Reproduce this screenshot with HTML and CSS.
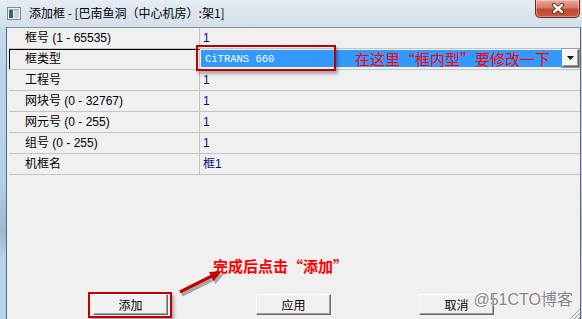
FILE: index.html
```html
<!DOCTYPE html>
<html lang="zh-CN">
<head>
    <meta charset="UTF-8">
    <meta name="viewport" content="width=device-width, initial-scale=1.0">
    <title>添加框</title>
    <link rel="stylesheet" href="styles.css">
</head>
<body>
    <div class="window">
        <div class="titlebar">
            <svg class="app-icon" width="14" height="13" viewBox="0 0 14 13">
                <rect x="0.5" y="0.5" width="13" height="12" fill="#eef2f6" stroke="#7d8b98"/>
                <rect x="2" y="3" width="4" height="8" fill="#2e6b63"/>
                <rect x="7" y="3" width="5" height="8" fill="#c9d3dc"/>
                <rect x="2" y="2" width="10" height="1" fill="#9fb0bf"/>
            </svg>
            <span class="title">添加框 - [巴南鱼洞（中心机房）:架1]</span>
            <div class="close">
                <svg width="14" height="11" viewBox="0 0 14 11">
                    <path d="M3 2 L11 9 M11 2 L3 9" stroke="#5a2318" stroke-width="4.2" stroke-linecap="round"/>
                    <path d="M3 2 L11 9 M11 2 L3 9" stroke="#fff" stroke-width="2.4" stroke-linecap="round"/>
                </svg>
            </div>
        </div>

        <div class="client">
            <div class="grid">
                <div class="row"><div class="key">框号 (1 - 65535)</div><div class="val">1</div></div>
                <div class="row focus">
                    <div class="key">框类型</div>
                    <div class="val combo">
                        <div class="combo-field">
                            <span class="combo-text">CiTRANS 660</span>
                            <span class="note">在这里“框内型”要修改一下</span>
                        </div>
                        <div class="combo-btn">
                            <svg width="7" height="4" viewBox="0 0 7 4"><path d="M0 0 H7 L3.5 4 Z" fill="#000"/></svg>
                        </div>
                    </div>
                </div>
                <div class="row"><div class="key">工程号</div><div class="val">1</div></div>
                <div class="row"><div class="key">网块号 (0 - 32767)</div><div class="val">1</div></div>
                <div class="row"><div class="key">网元号 (0 - 255)</div><div class="val">1</div></div>
                <div class="row"><div class="key">组号 (0 - 255)</div><div class="val">1</div></div>
                <div class="row"><div class="key">机框名</div><div class="val">框1</div></div>
            </div>

            <div class="hint">完成后点击“添加”</div>

            <div class="buttons">
                <button class="btn btn-marked">添加</button>
                <button class="btn">应用</button>
                <button class="btn">取消</button>
            </div>

            <!-- annotation arrow -->
            <svg class="arrow" width="60" height="40" viewBox="0 0 60 40">
                <g transform="translate(2 3)" opacity="0.3">
                    <path d="M10 30 L42 14" stroke="#000" stroke-width="3.2"/>
                    <path d="M52 9 L43.5 18.9 L39.1 9.9 Z" fill="#000"/>
                </g>
                <path d="M10 30 L42 14" stroke="#c00000" stroke-width="3.2"/>
                <path d="M52 9 L43.5 18.9 L39.1 9.9 Z" fill="#c00000"/>
            </svg>

            <div class="watermark">@51CTO博客</div>
            <div class="grip"></div>
        </div>
    </div>
</body>
</html>
```

FILE: styles.css
```css
* {
    box-sizing: border-box;
}

body {
    margin: 0;
    font-family: "Liberation Sans", "Noto Sans CJK SC", sans-serif;
    font-size: 12px;
    background-color: #fff;
}

.window {
    width: 582px;
    height: 319px;
    display: flex;
    flex-direction: column;
    overflow: hidden;
    background: linear-gradient(to bottom, #d4e1ee 0, #bcd4ec 60px, #b4d0ec 180px, #9fb6cc 230px, #b8d3ee 260px);
}

.titlebar {
    height: 27px;
    flex: none;
    display: flex;
    align-items: flex-start;
    padding-left: 7px;
    background: linear-gradient(to bottom, #e4ecf4, #d3dfea);
}

.app-icon {
    margin-top: 7px;
    flex: none;
}

.title {
    margin-left: 8px;
    line-height: 25px;
    font-family: "Noto Sans CJK SC", sans-serif;
    font-size: 12px;
    color: #000;
}

.close {
    margin-left: auto;
    margin-right: 2px;
    width: 45px;
    height: 18px;
    border: 1px solid #6b2418;
    border-top: none;
    border-radius: 0 0 5px 5px;
    background: linear-gradient(to bottom, #e9a899 0, #d67a66 45%, #c04a33 55%, #c9583f 100%);
    box-shadow: inset 0 0 0 1px rgba(255, 255, 255, 0.35);
    display: flex;
    align-items: center;
    justify-content: center;
}

.client {
    flex: 1;
    margin: 0 1px 0 6px;
    border-left: 1px solid #56697d;
    border-right: 1px solid #56697d;
    border-top: 1px solid #848f9a;
    background-color: #f0f0f0;
    display: flex;
    flex-direction: column;
    position: relative;
}

.grid {
    margin-left: 2px;
}

.row {
    display: flex;
    height: 21px;
    border-bottom: 1px solid #c4c4c4;
}

.key {
    width: 191px;
    padding-left: 16px;
    border-right: 1px solid #c4c4c4;
    line-height: 20px;
    color: #000;
}

.val {
    flex: 1;
    padding-left: 3px;
    line-height: 20px;
    color: #0a0a80;
}

.focus .key {
    border-top: 1px solid #000;
    border-left: 1px solid #000;
    padding-left: 15px;
    line-height: 19px;
}

/* combo box of the focused row */
.combo {
    display: flex;
    padding: 0;
}

.combo-field {
    flex: 1;
    margin: 1px 0 2px 1px;
    background-color: #3399ff;
    display: flex;
    align-items: center;
    position: relative;
}

.combo-field::before {
    content: "";
    position: absolute;
    left: -5px;
    top: -5px;
    width: 136px;
    height: 22px;
    border: 2px solid #c00000;
    box-shadow: 2px 3px 3px rgba(0, 0, 0, 0.3);
}

.combo-text {
    margin-left: 4px;
    font-family: "Liberation Mono", monospace;
    font-size: 10.5px;
    color: #fff;
}

.note {
    margin-left: auto;
    margin-right: 12px;
    font-family: "Noto Sans CJK SC", sans-serif;
    font-size: 15px;
    line-height: 16px;
    color: #ff0000;
}

.combo-btn {
    width: 17px;
    height: 18px;
    margin-right: 1px;
    background-color: #f4f4f4;
    border: 1px solid;
    border-color: #fff #5e5e5e #5e5e5e #fff;
    box-shadow: inset -1px -1px #a0a0a0, 0 0 0 1px #9a9a9a;
    display: flex;
    align-items: center;
    justify-content: center;
}

.hint {
    margin-top: auto;
    padding-left: 206px;
    height: 20px;
    line-height: 20px;
    font-family: "Noto Sans CJK SC", sans-serif;
    font-size: 15px;
    font-weight: bold;
    color: #ff0000;
}

.buttons {
    display: flex;
    gap: 88px;
    padding-left: 86px;
    margin-top: 18px;
    padding-bottom: 4px;
}

.btn {
    width: 75px;
    height: 21px;
    padding: 0;
    background-color: #f0f0f0;
    border: 1px solid;
    border-color: #fff #696969 #696969 #fff;
    box-shadow: inset -1px -1px #a0a0a0;
    font-family: "Noto Sans CJK SC", sans-serif;
    font-size: 12px;
    color: #000;
    position: relative;
}

.btn-marked::after {
    content: "";
    position: absolute;
    top: -3px;
    left: -6px;
    right: -5px;
    bottom: -4px;
    border: 2px solid #c00000;
    box-shadow: 2px 3px 3px rgba(0, 0, 0, 0.3);
}

.arrow {
    position: absolute;
    left: 163px;
    top: 234px;
}

.watermark {
    position: absolute;
    right: 7px;
    bottom: 9px;
    font-family: "Liberation Sans", "Noto Sans CJK SC", sans-serif;
    font-size: 16px;
    line-height: 20px;
    color: #858585;
    text-shadow: 0 0 2px #fff, 0 0 2px #fff;
}

.grip {
    position: absolute;
    right: 0;
    bottom: 0;
    width: 11px;
    height: 11px;
    background: repeating-linear-gradient(135deg, transparent 0, transparent 2px, #9a9a9a 2px, #9a9a9a 3px);
    clip-path: polygon(100% 0, 100% 100%, 0 100%);
}
```
